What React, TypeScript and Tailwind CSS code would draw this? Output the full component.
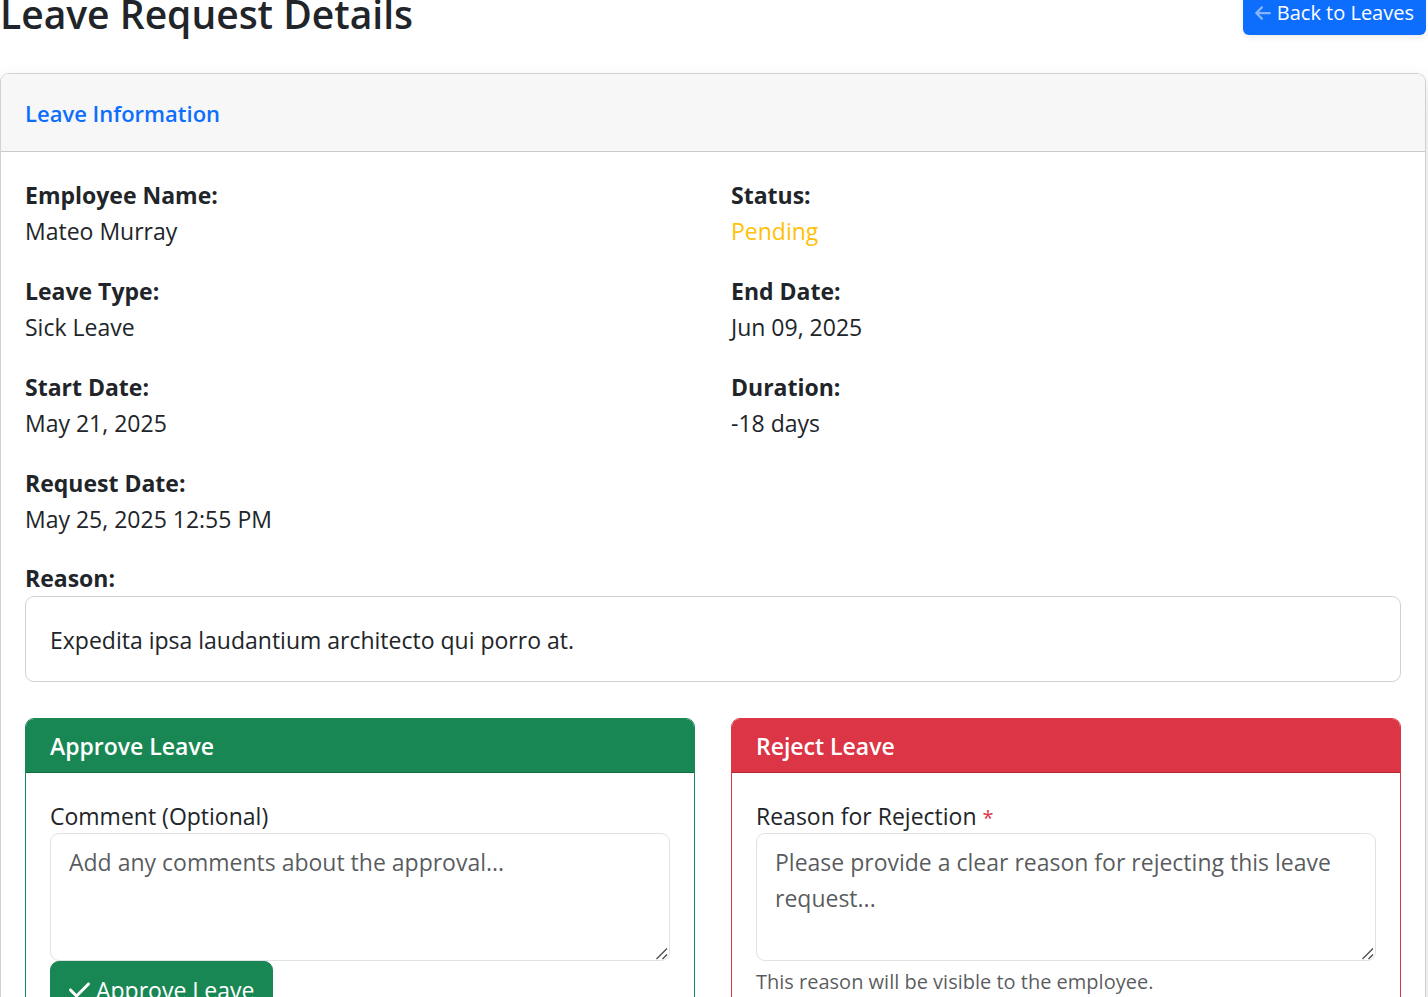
import type { ComponentProps, ReactNode } from "react";

type Tone = "success" | "danger";

const tones: Record<Tone, { border: string; header: string }> = {
  success: { border: "border-[#198754]", header: "bg-[#198754]" },
  danger: { border: "border-[#dc3545]", header: "bg-[#dc3545]" },
};

function Field({ label, children }: { label: string; children: ReactNode }) {
  return (
    <div className="mb-6">
      <dt className="font-bold">{label}</dt>
      <dd>{children}</dd>
    </div>
  );
}

function ActionCard({ tone, title, children }: { tone: Tone; title: string; children: ReactNode }) {
  return (
    <section className={`rounded-[9px] border bg-white ${tones[tone].border}`}>
      <h3
        className={`rounded-t-lg border-b border-b-black/18 px-6 pt-[13px] pb-[11px] leading-[29px] font-semibold text-white ${tones[tone].header}`}
      >
        {title}
      </h3>
      <div className="flex flex-col items-start px-6 pt-[26px] pb-6">{children}</div>
    </section>
  );
}

function TextArea(props: ComponentProps<"textarea">) {
  return (
    <div className="relative w-full">
      <textarea
        {...props}
        rows={3}
        className="block w-full resize-y rounded-[9px] border border-[#dee2e6] bg-white px-[18px] pt-[10px] pb-2 placeholder:text-[#212529]/75 [&::-webkit-resizer]:hidden"
      />
      <svg
        viewBox="0 0 12 12"
        className="pointer-events-none absolute right-0.5 bottom-px size-3"
        stroke="#4d4d4d"
        strokeWidth="1.3"
        aria-hidden="true"
      >
        <path d="M0.5 11L11 0.5M6.5 11L11 6.5" />
      </svg>
    </div>
  );
}

function ArrowLeft() {
  return (
    <svg viewBox="0 0 448 512" className="h-[18px] w-4 opacity-50" fill="currentColor" aria-hidden="true">
      <path d="M9.4 233.4c-12.5 12.5-12.5 32.8 0 45.3l160 160c12.5 12.5 32.8 12.5 45.3 0s12.5-32.8 0-45.3L109.2 288 416 288c17.7 0 32-14.3 32-32s-14.3-32-32-32l-306.7 0L214.6 118.6c12.5-12.5 12.5-32.8 0-45.3s-32.8-12.5-45.3 0l-160 160z" />
    </svg>
  );
}

function Check() {
  return (
    <svg viewBox="0 0 448 512" className="h-6 w-[21px]" fill="currentColor" aria-hidden="true">
      <path d="M438.6 105.4c12.5 12.5 12.5 32.8 0 45.3l-256 256c-12.5 12.5-32.8 12.5-45.3 0l-128-128c-12.5-12.5-12.5-32.8 0-45.3s32.8-12.5 45.3 0L160 338.7 393.4 105.4c12.5-12.5 32.8-12.5 45.3 0z" />
    </svg>
  );
}

export default function App() {
  return (
    <main className="-mt-[13px] mr-0.5 font-['Open_Sans',sans-serif] text-[23px] leading-9 text-[#212529]">
      <header className="mb-9 flex items-center justify-between">
        <h1 className="pt-1 text-[39px] leading-[46px] font-semibold">Leave Request Details</h1>
        <a
          href="#leaves"
          className="flex items-center gap-1.5 rounded-md bg-[#0d6efd] px-3 pt-[9px] pb-[7px] text-[20px] leading-[30px] text-white shadow-[0_3px_6px_rgba(0,0,0,0.075)]"
        >
          <ArrowLeft />
          Back to Leaves
        </a>
      </header>

      <section className="rounded-[9px] border border-black/18 bg-white shadow-[0_12px_24px_rgba(0,0,0,0.15)]">
        <h2 className="rounded-t-lg border-b border-black/18 bg-[#f7f7f7] px-6 pt-[25px] pb-[23px] text-[22px] leading-[29px] font-semibold text-[#0d6efd]">
          Leave Information
        </h2>
        <div className="px-6 pt-[25px] pb-6">
          <dl className="grid grid-cols-2 gap-x-9">
            <div>
              <Field label="Employee Name:">Mateo Murray</Field>
              <Field label="Leave Type:">Sick Leave</Field>
              <Field label="Start Date:">May 21, 2025</Field>
              <Field label="Request Date:">May 25, 2025 12:55 PM</Field>
            </div>
            <div>
              <Field label="Status:">
                <span className="text-[#ffc107]">Pending</span>
              </Field>
              <Field label="End Date:">Jun 09, 2025</Field>
              <Field label="Duration:">-18 days</Field>
            </div>
          </dl>

          <div className="mb-9">
            <p className="leading-[35px] font-bold">Reason:</p>
            <p className="rounded-[9px] border border-black/18 px-6 pt-[25px] pb-[23px]">
              Expedita ipsa laudantium architecto qui porro at.
            </p>
          </div>

          <div className="grid grid-cols-2 gap-x-9">
            <ActionCard tone="success" title="Approve Leave">
              <label htmlFor="comment" className="leading-[34px]">
                Comment (Optional)
              </label>
              <TextArea id="comment" placeholder="Add any comments about the approval..." />
              <button
                type="button"
                className="flex items-center gap-1.5 rounded-[9px] border border-[#198754] bg-[#198754] px-[18px] pt-[10px] pb-2 text-white"
              >
                <Check />
                Approve Leave
              </button>
            </ActionCard>
            <ActionCard tone="danger" title="Reject Leave">
              <label htmlFor="rejection" className="leading-[34px]">
                Reason for Rejection <span className="text-[20px] leading-none text-[#dc3545]">*</span>
              </label>
              <TextArea
                id="rejection"
                required
                aria-describedby="rejection-help"
                placeholder="Please provide a clear reason for rejecting this leave request..."
              />
              <p id="rejection-help" className="mt-[5px] text-[20px] leading-8 text-[#212529]/75">
                This reason will be visible to the employee.
              </p>
            </ActionCard>
          </div>
        </div>
      </section>
    </main>
  );
}
